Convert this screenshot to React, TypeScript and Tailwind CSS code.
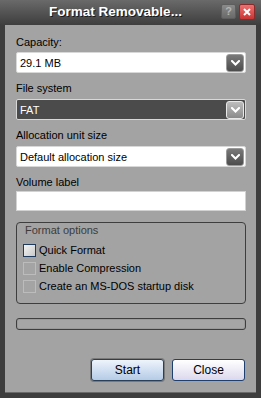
import React from "react";

function Chevron() {
	return (
		<svg width="9" height="6" viewBox="0 0 9 6">
			<path d="M1 1 L4.5 4.5 L8 1" fill="none" stroke="#fff" strokeWidth="2" strokeLinecap="square" />
		</svg>
	);
}

function Combo({ value, active }: { value: string; active?: boolean }) {
	return (
		<div
			className={
				"flex h-[21px] items-center rounded-[2px] border border-[#d8d8d8] pl-[2px] pr-[1px] " +
				(active ? "bg-[#4b4b4b] text-white" : "bg-white text-black")
			}
		>
			<span className="flex-1 pl-[1px] leading-[14px]">{value}</span>
			{active ? (
				<div className="flex h-[18px] w-[18px] items-center justify-center rounded-[3px] border border-[#e8e8e8] bg-gradient-to-b from-[#bdbdbd] to-[#8a8a8a]">
					<Chevron />
				</div>
			) : (
				<div className="flex h-[18px] w-[18px] items-center justify-center rounded-[3px] border border-[#9a9a9a] bg-gradient-to-b from-[#7a7a7a] to-[#4c4c4c]">
					<Chevron />
				</div>
			)}
		</div>
	);
}

function Check({ label, focused }: { label: string; focused?: boolean }) {
	return (
		<div className="flex h-[18px] items-center">
			{focused ? (
				<div className="h-[13px] w-[13px] border border-[#1d3b5e] bg-gradient-to-br from-[#f4f4f4] to-[#c9c9c9]" />
			) : (
				<div className="h-[13px] w-[13px] border border-[#bcbcbc] bg-[#a4a4a4]" />
			)}
			<span className="ml-[3px] leading-[14px]">{label}</span>
		</div>
	);
}

export default function App() {
	return (
		<div
			className="flex h-[398px] w-[261px] flex-col bg-[#3d3d3d] text-[11px] text-black"
			style={{ fontFamily: '"Liberation Sans", Arial, sans-serif' }}
		>
			{/* title bar */}
			<div className="relative flex h-[25px] items-center justify-center bg-gradient-to-b from-[#6a6a6a] to-[#3e3e3e] pr-[30px]">
				<span
					className="text-[13.5px] font-bold text-white"
					style={{ textShadow: "1px 1px 0 #1a1a1a" }}
				>
					Format Removable...
				</span>
				<div className="absolute right-[6px] top-[4px] flex gap-[3px]">
					<div className="flex h-[15px] w-[15px] items-center justify-center rounded-[2px] border border-[#5e5e5e] bg-gradient-to-b from-[#8a8a8a] to-[#6a6a6a] text-[11px] font-bold leading-none text-[#b4b4b4]">
						?
					</div>
					<div className="flex h-[16px] w-[16px] items-center justify-center rounded-[2px] border border-[#8a2a2a] bg-gradient-to-b from-[#ee7070] to-[#c83434]">
						<svg width="8" height="8" viewBox="0 0 8 8">
							<path d="M1 1 L7 7 M7 1 L1 7" stroke="#fff" strokeWidth="2" />
						</svg>
					</div>
				</div>
			</div>

			{/* client */}
			<div className="mx-[5px] mb-[5px] flex flex-1 flex-col border-b border-[#6a6a6a] bg-[#a3a3a3] pl-[11px] pr-[10px] pt-[10px]">
				<div className="leading-[14px]">Capacity:</div>
				<div className="mt-[3px]">
					<Combo value="29.1 MB" />
				</div>
				<div className="mt-[8px] leading-[14px]">File system</div>
				<div className="mt-[4px]">
					<Combo value="FAT" active />
				</div>
				<div className="mt-[8px] leading-[14px]">Allocation unit size</div>
				<div className="mt-[4px]">
					<Combo value="Default allocation size" />
				</div>
				<div className="mt-[8px] leading-[14px]">Volume label</div>
				<div className="mt-[2px] h-[20px] border border-[#d2d2d2] bg-white" />

				{/* format options */}
				<div className="mt-[11px] flex h-[82px] flex-col rounded-[4px] border border-[#3e3e3e] pl-[6px]">
					<div className="ml-[2px] leading-[14px] text-[#3c3c3c]">Format options</div>
					<div className="mt-[4px] flex flex-col">
						<Check label="Quick Format" focused />
						<Check label="Enable Compression" />
						<Check label="Create an MS-DOS startup disk" />
					</div>
				</div>

				{/* progress */}
				<div className="mt-[14px] h-[12px] rounded-[3px] border border-[#3e3e3e] bg-[#a6a6a6] shadow-[inset_0_0_0_1px_#9a9a9a]" />

				{/* buttons */}
				<div className="mt-[29px] flex justify-end gap-[8px] pr-[1px]">
					<button className="h-[22px] w-[73px] rounded-[3px] border border-[#2b3f58] bg-gradient-to-b from-[#eef4fb] to-[#b5cbe6] text-[12px] shadow-[0_0_0_1px_#7a7a7a]">
						Start
					</button>
					<button className="h-[22px] w-[73px] rounded-[3px] border border-[#1f3f6f] bg-gradient-to-b from-[#ffffff] to-[#dcd8ec] text-[12px]">
						Close
					</button>
				</div>
			</div>
		</div>
	);
}
